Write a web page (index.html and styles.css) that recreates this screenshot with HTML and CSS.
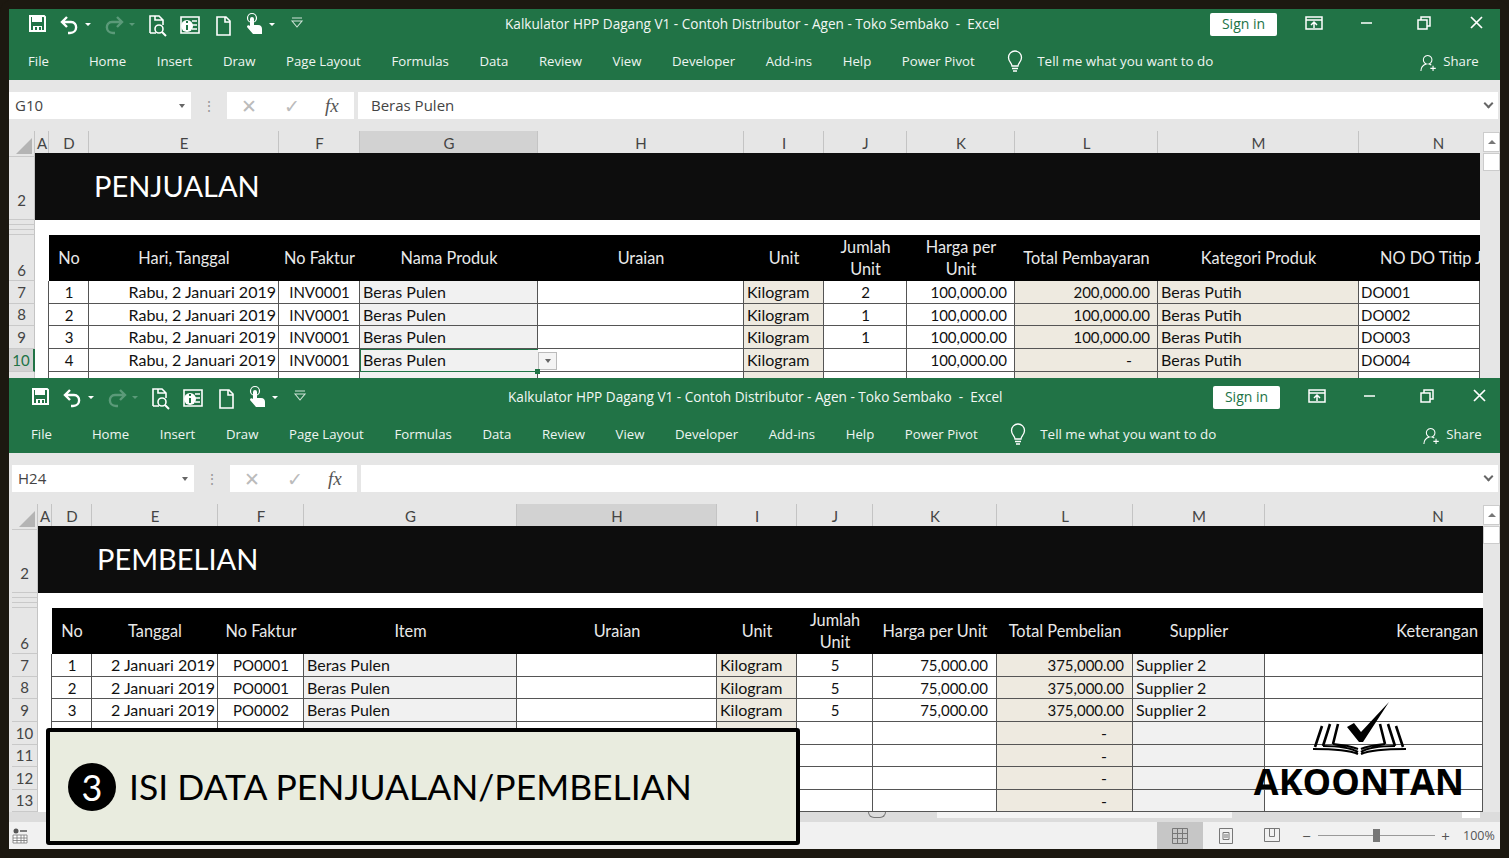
FILE: index.html
```html
<!DOCTYPE html>
<html lang="id">
<head>
<meta charset="utf-8">
<title>Kalkulator HPP Dagang</title>
<link rel="stylesheet" href="styles.css">
</head>
<body>
<svg class="sprite" width="0" height="0">
  <defs>
    <symbol id="qat" viewBox="0 0 290 33">
      <g fill="none" stroke="#fff" stroke-width="1.6">
        <path fill="#217346" stroke-width="2" d="M10 8h14l1 1v14H10z"/>
        <path fill="#fff" stroke="none" d="M12 9h10v5H12zM13 18h9v5h-9z"/>
        <path fill="#217346" stroke="none" d="M15 19h2v3h-2zM19 19h2v3h-2z"/>
        <path stroke-width="2.4" d="M47 9l-5 5 5 5M42 14h9c7 0 7 11-1 11h-2"/>
        <path stroke="#5b9a79" stroke-width="2.400" d="M97 9l5 5-5 5M102 14H92c-7 0-7 11 1 11h2"/>
        <path d="M130 25V8h9l4 4v5M130 25h6M135 8v4h8"/>
        <circle cx="139" cy="21" r="4"/><path stroke-width="2" d="M142 24l4 4"/>
        <path d="M161 9h18v16h-18zM172 13h5M172 17h5M172 21h5"/>
        <circle cx="167" cy="18" r="6" fill="#fff" stroke="none"/>
        <path stroke="#217346" stroke-width="2" d="M167 17v5M167 13v2"/>
        <path d="M197 9h9l4 4v14h-13zM205 9v5h5"/>
        <circle cx="232" cy="10" r="4.500" stroke-width="1.200"/>
        <path fill="#fff" stroke="none" d="M230 11a2 2 0 0 1 4 0v6h4c3 0 4 2 4 4v5h-9l-6-7c0-2 2-2 3-1l0-1z"/>
        <path d="M272 10h10M272 13l5 6 5-6z" stroke="#cfe3d8" stroke-width="1.100"/>
      </g>
      <path fill="#fff" d="M65 15h6l-3 3zM249 15h6l-3 3z"/>
      <path fill="#5b9a79" d="M109 15h6l-3 3z"/>
    </symbol>
    <symbol id="wc" viewBox="0 0 190 33">
      <g fill="none" stroke="#fff" stroke-width="1.500">
        <path d="M7 9h16v12H7zM7 12h16M15 20v-6M12 17l3-3 3 3"/>
        <path d="M62 15h11"/>
        <path d="M119 12h9v9h-9zM122 12V9h9v9h-3"/>
        <path stroke-width="1.700" d="M172 9l11 11M183 9l-11 11"/>
      </g>
    </symbol>
    <symbol id="bulb" viewBox="0 0 18 24">
      <path fill="none" stroke="#fff" stroke-width="1.300" d="M6 17c0-3-3.500-4-3.500-8.500a6.500 6.500 0 0 1 13 0C15.500 13 12 14 12 17zM6 19.500h6M7 22h4"/>
    </symbol>
    <symbol id="share" viewBox="0 0 20 20">
      <path fill="none" stroke="#fff" stroke-width="1.200" d="M1 19c0-4 2.500-7 6-8a4.800 4.800 0 1 1 3 0c1 .3 2 .8 2.500 1.400M14.500 13v6M11.500 16h6"/>
    </symbol>
    <symbol id="logo" viewBox="0 0 100 58">
      <path d="M37 28l7-4 7 9L79 3 53 43h-4z"/>
      <g fill="none" stroke="#000">
        <path stroke-width="2.600" d="M12 27L5 48M20 25l-7 22M28 25l-5 20M86 27l7 21M78 25l7 22M70 25l5 20"/>
        <path stroke-width="2.200" d="M3 50c18 0 36 1 45 5M13 47c15 0 28 2 35 6M23 45c10 1 20 3 25 5"/>
        <path stroke-width="2.200" d="M96 50c-18 0-36 1-45 5M85 47c-15 0-28 2-34 6M75 45c-10 1-20 3-24 5"/>
      </g>
    </symbol>
  </defs>
</svg>

<main class="stage">

  <section class="win win-a">
    <header class="titlebar">
      <svg class="qat"><use href="#qat"/></svg>
      <span class="doc-title">Kalkulator HPP Dagang V1 - Contoh Distributor - Agen - Toko Sembako &nbsp;-&nbsp; Excel</span>
      <button class="signin">Sign in</button>
      <svg class="wc"><use href="#wc"/></svg>
    </header>
    <nav class="tabs">
      <span class="tab tab-file">File</span><span class="tab">Home</span><span class="tab">Insert</span><span class="tab">Draw</span><span class="tab">Page Layout</span><span class="tab">Formulas</span><span class="tab">Data</span><span class="tab">Review</span><span class="tab">View</span><span class="tab">Developer</span><span class="tab">Add-ins</span><span class="tab">Help</span><span class="tab">Power Pivot</span>
      <svg class="bulb"><use href="#bulb"/></svg>
      <span class="tell">Tell me what you want to do</span>
      <svg class="share-ic"><use href="#share"/></svg>
      <span class="share">Share</span>
    </nav>
    <div class="formula">
      <div class="namebox">G10<i class="dd"></i></div>
      <div class="grip">⋮</div>
      <div class="fx-btns"><span>✕</span><span>✓</span><em>fx</em></div>
      <div class="input">Beras Pulen<i class="chev"></i></div>
    </div>
    <div class="sheet">
      <div class="cells">
        <div class="row colhead"><div class="corner"></div><div>A</div><div>D</div><div>E</div><div>F</div><div class="sel">G</div><div>H</div><div>I</div><div>J</div><div>K</div><div>L</div><div>M</div><div class="n-wide">N</div></div>
        <div class="row band-row"><div class="rh rh1"></div><div class="rh rh2">2</div><div class="band">PENJUALAN</div></div>
        <div class="row thin"><div class="rh"></div></div>
        <div class="row thin"><div class="rh"></div></div>
        <div class="row thin"><div class="rh"></div></div>
        <div class="row head"><div class="rh">6</div><div class="a"></div><div>No</div><div>Hari, Tanggal</div><div>No Faktur</div><div>Nama Produk</div><div>Uraian</div><div>Unit</div><div>Jumlah<br>Unit</div><div>Harga per<br>Unit</div><div>Total Pembayaran</div><div>Kategori Produk</div><div class="clip">NO DO Titip Jual</div></div>
        <div class="row data"><div class="rh">7</div><div class="a"></div><div class="c">1</div><div class="r">Rabu, 2 Januari 2019</div><div class="c">INV0001</div><div class="g">Beras Pulen</div><div></div><div class="t">Kilogram</div><div class="c">2</div><div class="r m">100,000.00</div><div class="r m t">200,000.00</div><div class="t">Beras Putih</div><div class="code">DO001</div></div>
        <div class="row data h22"><div class="rh">8</div><div class="a"></div><div class="c">2</div><div class="r">Rabu, 2 Januari 2019</div><div class="c">INV0001</div><div class="g">Beras Pulen</div><div></div><div class="t">Kilogram</div><div class="c">1</div><div class="r m">100,000.00</div><div class="r m t">100,000.00</div><div class="t">Beras Putih</div><div class="code">DO002</div></div>
        <div class="row data"><div class="rh">9</div><div class="a"></div><div class="c">3</div><div class="r">Rabu, 2 Januari 2019</div><div class="c">INV0001</div><div class="g">Beras Pulen</div><div></div><div class="t">Kilogram</div><div class="c">1</div><div class="r m">100,000.00</div><div class="r m t">100,000.00</div><div class="t">Beras Putih</div><div class="code">DO003</div></div>
        <div class="row data"><div class="rh rh-sel">10</div><div class="a"></div><div class="c">4</div><div class="r">Rabu, 2 Januari 2019</div><div class="c">INV0001</div><div class="g active">Beras Pulen<span class="cell-dd"><i class="dd"></i></span><span class="handle"></span></div><div></div><div class="t">Kilogram</div><div class="c"></div><div class="r m">100,000.00</div><div class="r t dash">-</div><div class="t">Beras Putih</div><div class="code">DO004</div></div>
        <div class="row data"><div class="rh">11</div><div class="a"></div><div class="c">5</div><div class="r">Rabu, 2 Januari 2019</div><div class="c">INV0001</div><div class="g">Beras Pulen</div><div></div><div class="t">Kilogram</div><div class="c"></div><div class="r m">100,000.00</div><div class="r t"></div><div class="t">Beras Putih</div><div class="code">DO005</div></div>
      </div>
      <div class="vscroll"><div class="arrow"></div><div class="thumb"></div></div>
    </div>
  </section>

  <section class="win win-b">
    <header class="titlebar">
      <svg class="qat"><use href="#qat"/></svg>
      <span class="doc-title">Kalkulator HPP Dagang V1 - Contoh Distributor - Agen - Toko Sembako &nbsp;-&nbsp; Excel</span>
      <button class="signin">Sign in</button>
      <svg class="wc"><use href="#wc"/></svg>
    </header>
    <nav class="tabs">
      <span class="tab tab-file">File</span><span class="tab">Home</span><span class="tab">Insert</span><span class="tab">Draw</span><span class="tab">Page Layout</span><span class="tab">Formulas</span><span class="tab">Data</span><span class="tab">Review</span><span class="tab">View</span><span class="tab">Developer</span><span class="tab">Add-ins</span><span class="tab">Help</span><span class="tab">Power Pivot</span>
      <svg class="bulb"><use href="#bulb"/></svg>
      <span class="tell">Tell me what you want to do</span>
      <svg class="share-ic"><use href="#share"/></svg>
      <span class="share">Share</span>
    </nav>
    <div class="formula">
      <div class="namebox">H24<i class="dd"></i></div>
      <div class="grip">⋮</div>
      <div class="fx-btns"><span>✕</span><span>✓</span><em>fx</em></div>
      <div class="input"><i class="chev"></i></div>
    </div>
    <div class="sheet">
      <div class="cells">
        <div class="row colhead"><div class="corner"></div><div>A</div><div>D</div><div>E</div><div>F</div><div>G</div><div class="sel">H</div><div>I</div><div>J</div><div>K</div><div>L</div><div>M</div><div class="n-far">N</div></div>
        <div class="row band-row"><div class="rh rh1"></div><div class="rh rh2">2</div><div class="band">PEMBELIAN</div></div>
        <div class="row thin"><div class="rh"></div></div>
        <div class="row thin"><div class="rh"></div></div>
        <div class="row thin"><div class="rh"></div></div>
        <div class="row head"><div class="rh">6</div><div class="a"></div><div>No</div><div>Tanggal</div><div>No Faktur</div><div>Item</div><div>Uraian</div><div>Unit</div><div>Jumlah<br>Unit</div><div>Harga per Unit</div><div>Total Pembelian</div><div>Supplier</div><div class="r">Keterangan</div></div>
        <div class="row data"><div class="rh">7</div><div class="a"></div><div class="c">1</div><div class="r">2 Januari 2019</div><div class="c">PO0001</div><div class="g">Beras Pulen</div><div></div><div class="t">Kilogram</div><div class="c">5</div><div class="r m">75,000.00</div><div class="r m t">375,000.00</div><div class="g">Supplier 2</div><div></div></div>
        <div class="row data h22"><div class="rh">8</div><div class="a"></div><div class="c">2</div><div class="r">2 Januari 2019</div><div class="c">PO0001</div><div class="g">Beras Pulen</div><div></div><div class="t">Kilogram</div><div class="c">5</div><div class="r m">75,000.00</div><div class="r m t">375,000.00</div><div class="g">Supplier 2</div><div></div></div>
        <div class="row data"><div class="rh">9</div><div class="a"></div><div class="c">3</div><div class="r">2 Januari 2019</div><div class="c">PO0002</div><div class="g">Beras Pulen</div><div></div><div class="t">Kilogram</div><div class="c">5</div><div class="r m">75,000.00</div><div class="r m t">375,000.00</div><div class="g">Supplier 2</div><div></div></div>
        <div class="row data"><div class="rh">10</div><div class="a"></div><div></div><div></div><div></div><div class="g"></div><div></div><div class="t"></div><div></div><div></div><div class="r t dash">-</div><div class="g"></div><div></div></div>
        <div class="row data h22"><div class="rh">11</div><div class="a"></div><div></div><div></div><div></div><div class="g"></div><div></div><div class="t"></div><div></div><div></div><div class="r t dash">-</div><div class="g"></div><div></div></div>
        <div class="row data"><div class="rh">12</div><div class="a"></div><div></div><div></div><div></div><div class="g"></div><div></div><div class="t"></div><div></div><div></div><div class="r t dash">-</div><div class="g"></div><div></div></div>
        <div class="row data h22"><div class="rh">13</div><div class="a"></div><div></div><div></div><div></div><div class="g"></div><div></div><div class="t"></div><div></div><div></div><div class="r t dash">-</div><div class="g"></div><div></div></div>
      </div>
      <div class="vscroll"><div class="arrow"></div><div class="thumb"></div></div>
    </div>
    <div class="hscroll"><div class="navdot"></div><div class="hthumb"></div><div class="hbtn"></div></div>
    <footer class="status">
      <svg class="st-sheet" viewBox="0 0 16 16"><circle cx="4" cy="3" r="2.500" fill="#555"/><path d="M8 3h7" stroke="#555" stroke-width="1.500"/><path d="M1 7h14v8H1zM1 10h14M1 12.500h14M5 7v8M9 7v8M12 7v8" fill="#fff" stroke="#777" stroke-width=".8"/></svg>
      <div class="view view-on"><svg viewBox="0 0 16 16"><path d="M.5.5h15v15H.5zM.5 5.500h15M.5 10.500h15M5.500.5v15M10.500.5v15" fill="none" stroke="#777"/></svg></div>
      <div class="view"><svg viewBox="0 0 16 16"><path d="M1.500.5h13v15h-13zM5 4.500h6v7H5zM6 7h4M6 9h4" fill="none" stroke="#777"/></svg></div>
      <div class="view"><svg viewBox="0 0 16 16"><path d="M.5.5h15v13H.5zM5.500.5v8h5v-8" fill="none" stroke="#777"/></svg></div>
      <span class="zoom-sign">−</span>
      <div class="slider"><i></i></div>
      <span class="zoom-sign">+</span>
      <span class="pct">100%</span>
    </footer>
  </section>

  <aside class="callout">
    <span class="num">3</span>
    <span class="callout-text">ISI DATA PENJUALAN/PEMBELIAN</span>
  </aside>

  <div class="brand">
    <svg class="brand-mark"><use href="#logo"/></svg>
    <span class="brand-name">AKOONTAN</span>
  </div>

</main>
</body>
</html>
```

FILE: styles.css
```css
* { box-sizing: border-box; }
html, body { margin: 0; padding: 0; background: #1c1810; }
body { width: 1509px; height: 858px; overflow: hidden; font-family: "Lato", "Liberation Sans", sans-serif; }
.sprite { position: absolute; }
.stage { position: relative; width: 1509px; height: 858px; background: #1c1810; border-radius: 12px; overflow: hidden; }

.win { position: absolute; left: 9px; width: 1491px; overflow: hidden; background: #e6e6e6; --shift: 0px; }
.win-a { top: 9px; height: 369px; --cols: 26px 14px 40px 190px 81px 178px 206px 80px 83px 108px 143px 201px 121px; --money: 7px; }
.win-b { top: 378px; height: 471px; --shift: 3px; --money: 8px; --cols: 26px 14px 40px 126px 86px 213px 200px 80px 76px 124px 136px 132px 218px; }

/* title bar */
.titlebar { height: 33px; background: #217346; display: flex; align-items: center; padding: 0 0 2px var(--shift); color: #f2f7f4; font-family: "Open Sans", sans-serif; }
.win-b .titlebar { height: 37px; padding-top: 4px; }
.qat { width: 290px; height: 33px; margin-left: 11px; flex: none; }
.doc-title { width: 900px; flex: none; font-size: 13.600px; white-space: nowrap; padding: 0 0 2px 195px; }
.signin { width: 67px; height: 23px; flex: none; border: 0; border-radius: 2px; background: #fff; color: #217346; font: 14px "Open Sans", sans-serif; padding: 0 0 3px; }
.wc { width: 190px; height: 33px; flex: none; margin-left: 22px; }

/* tabs */
.tabs { height: 38px; background: #217346; display: flex; align-items: center; padding-left: var(--shift); color: #eef5f1; font: 13.200px "Open Sans", sans-serif; white-space: nowrap; }
.tab { margin-right: 30.600px; }
.tab:first-child { margin-left: 19px; }
.tab-file { margin-right: 40px; }
.bulb { width: 18px; height: 24px; flex: none; margin-left: 1px; }
.tell { margin-left: 13px; font-size: 13.400px; width: 383px; flex: none; }
.share-ic { width: 18px; height: 20px; flex: none; margin-top: 3px; }
.share { margin-left: 5px; }

/* formula bar */
.formula { height: 51px; display: flex; align-items: center; padding-left: var(--shift); background: #e6e6e6; font: 15px "Open Sans", sans-serif; color: #444; }
.namebox { width: 182px; height: 27px; flex: none; background: #fff; padding-left: 6px; line-height: 27px; position: relative; }
.namebox .dd { position: absolute; right: 6px; top: 12px; }
.dd { display: block; width: 0; height: 0; border: 3px solid transparent; border-top: 4px solid #666; border-bottom: 0; }
.grip { width: 36px; flex: none; text-align: center; color: #999; font-size: 14px; }
.fx-btns { width: 127px; height: 27px; flex: none; background: #fff; display: flex; align-items: center; color: #bbb; font-size: 19px; }
.fx-btns span { width: 43px; text-align: center; flex: none; }
.fx-btns em { color: #555; font: italic 19px "Liberation Serif", serif; margin-left: 12px; }
.input { height: 27px; flex: 1; margin: 0 2px 0 4px; background: #fff; padding-left: 13px; line-height: 27px; position: relative; }
.chev { position: absolute; right: 6px; top: 8px; width: 7px; height: 7px; border: solid #666; border-width: 0 2px 2px 0; transform: rotate(45deg); }

/* sheet */
.sheet { display: flex; padding-left: var(--shift); background: #e6e6e6; }
.cells { flex: none; overflow: hidden; }
.row { display: grid; grid-template-columns: var(--cols); font-size: 16px; color: #111; }
.colhead { height: 22px; color: #444; background: #e6e6e6; line-height: 24px; font-size: 15px; }
.colhead > div { text-align: center; border-right: 1px solid #c4c4c4; padding-left: 1px; }
.colhead .sel { background: #d2d2d2; border-bottom: 1px solid #217346; }
.colhead .n-wide { border-right: 0; padding-left: 38px; }
.colhead .n-far { border-right: 0; padding-left: 128px; }
.corner { position: relative; overflow: hidden; }
.corner::after { content: ""; position: absolute; right: 2px; bottom: 2px; border: 8px solid transparent; border-right-color: #b4b4b4; border-bottom-color: #b4b4b4; }

.rh { background: #e6e6e6; color: #444; border-right: 1px solid #c4c4c4; border-bottom: 1px solid #c9c9c9; text-align: center; display: flex; align-items: flex-end; justify-content: center; font-size: 15px; line-height: 15px; padding-bottom: 1px; }
.rh-sel { background: #d2d2d2; color: #217346; border-right: 2px solid #217346; }
.band-row { grid-template-rows: 4px 63px; background: #fff; }
.rh1 { grid-column: 1; grid-row: 1; }
.rh2 { grid-column: 1; grid-row: 2; padding-bottom: 11px; }
.band { grid-column: 2 / -1; grid-row: 1 / 3; background: #0d0d0d; color: #fff; font-size: 29px; padding-left: 59px; display: flex; align-items: center; padding-bottom: 2px; }
.thin { height: 5px; background: #fff; }
.thin .rh { grid-column: 1; }

.head { height: 46px; background: #000; color: #e9e9e9; font-size: 16.300px; }
.head > div { display: flex; align-items: center; justify-content: center; text-align: center; line-height: 22.500px; white-space: nowrap; overflow: hidden; }
.head > .rh { align-items: flex-end; color: #444; line-height: 15px; padding-bottom: 2px; font-size: 15px; }
.head .a { background: #fff; }
.head .clip { justify-content: flex-start; padding-left: 21px; }
.head .r { justify-content: flex-end; padding-right: 5px; }

.data { height: 23px; background: #fff; line-height: 22px; }
.h22 { height: 22px; }
.data > div { white-space: nowrap; padding: 0 2px 0 3px; border-right: 1px solid #555; border-bottom: 1px solid #555; overflow: hidden; }
.data > .rh { padding: 0 0 3px; border-right: 1px solid #c4c4c4; border-bottom: 1px solid #c9c9c9; }
.data > .a { border-bottom: 0; padding: 0; }
.data > .rh-sel { border-right: 2px solid #217346; }
.c { text-align: center; font-size: 15px; }
.r { text-align: right; }
.g { background: #f1f1f1; }
.t { background: #eeeae0; }
.data > .m { padding-right: var(--money); font-size: 15px; }
.data > .dash { padding-right: 25px; }
.data > .code { font-size: 15px; padding-left: 2px; }

.data > .active { position: relative; overflow: visible; border: 0; box-shadow: inset 1px 1px 0 #217346, inset 0 -1px 0 #217346; z-index: 1; }
.cell-dd { position: absolute; left: 178px; top: 3px; width: 19px; height: 18px; background: #f4f4f4; border: 1px solid #bbb; display: flex; align-items: center; justify-content: center; }
.handle { position: absolute; right: -2px; bottom: -2px; width: 5px; height: 5px; background: #217346; }

.vscroll { flex: 1; display: flex; flex-direction: column; align-items: flex-end; background: #e6e6e6; }
.arrow { width: 17px; height: 20px; background: #fff; border: 1px solid #ccc; position: relative; margin-top: 1px; }
.arrow::after { content: ""; position: absolute; left: 4px; top: 7px; border: 4px solid transparent; border-bottom: 4px solid #777; border-top: 0; }
.thumb { width: 17px; height: 18px; background: #fff; margin-top: 1px; border: 1px solid #ccc; }

.hscroll { height: 10px; background: #dcdcdc; display: flex; }
.navdot { width: 18px; height: 6px; margin-left: 859px; border: 1px solid #777; border-top: 0; border-radius: 0 0 9px 9px; flex: none; }
.hthumb { width: 295px; height: 6px; background: #f4f4f4; margin-left: 51px; flex: none; }
.hbtn { width: 18px; height: 6px; background: #fff; margin-left: 230px; flex: none; }

.status { height: 27px; background: #f1f1f1; display: flex; align-items: center; color: #555; font: 13px "Open Sans", sans-serif; }
.st-sheet { width: 16px; height: 16px; margin-left: 3px; margin-right: 1129px; flex: none; }
.view { width: 46px; height: 27px; display: flex; align-items: center; justify-content: center; flex: none; }
.view svg { width: 16px; height: 16px; }
.view-on { background: #c6c6c6; }
.zoom-sign { width: 15px; text-align: center; flex: none; font-size: 15px; }
.zoom-sign:first-of-type { margin-left: 4px; }
.slider { width: 117px; height: 1px; background: #999; flex: none; margin: 0 3px 0 4px; position: relative; }
.slider i { position: absolute; left: 55px; top: -6px; width: 7px; height: 13px; background: #777; }
.pct { margin-left: 10px; font-size: 12.500px; }

/* overlays */
.callout { position: absolute; left: 46px; top: 728px; width: 754px; height: 117px; border: 4px solid #000; border-radius: 3px; background: #e9ecdf; display: flex; align-items: center; padding-left: 18px; z-index: 5; }
.num { width: 48px; height: 48px; border-radius: 50%; background: #000; color: #fff; font-size: 36px; display: flex; align-items: center; justify-content: center; flex: none; }
.callout-text { margin-left: 13px; font-size: 35.500px; color: #000; white-space: nowrap; }
.brand { position: absolute; left: 1254px; top: 699px; width: 210px; display: flex; flex-direction: column; align-items: center; z-index: 5; }
.brand-mark { width: 100px; height: 58px; margin-left: 2px; }
.brand-name { font: 700 36px/38px "Open Sans", sans-serif; color: #000; margin-top: 6px; white-space: nowrap; }
```
